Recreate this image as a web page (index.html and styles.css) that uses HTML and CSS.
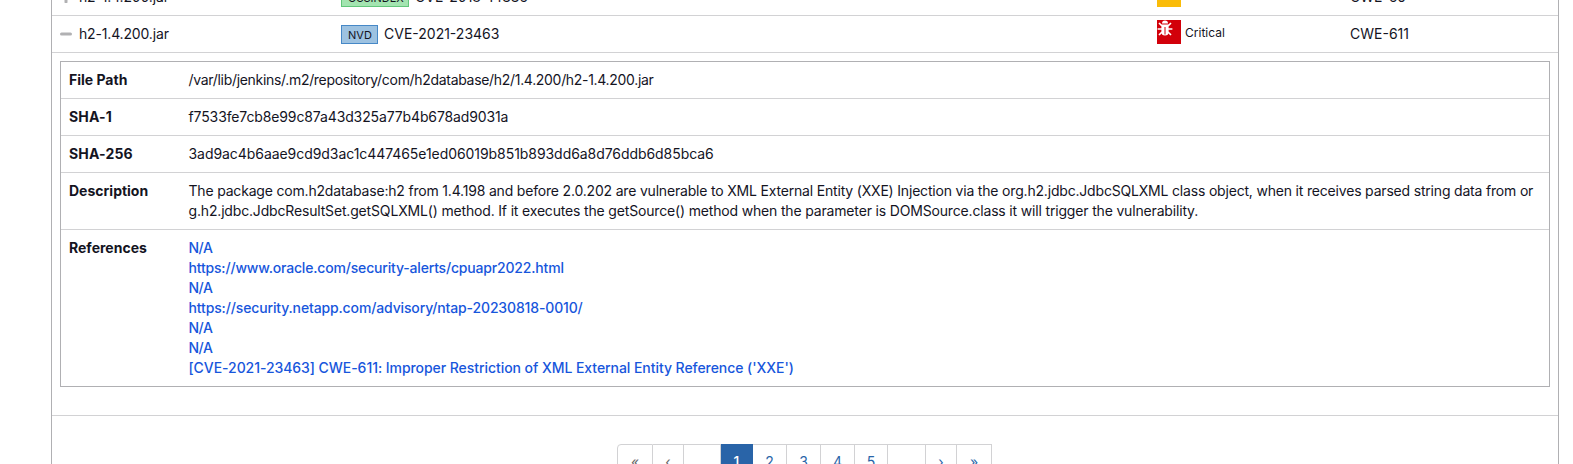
FILE: index.html
```
<!DOCTYPE html>
<html lang="en">
<head>
<meta charset="utf-8">
<title>Dependency-Check Results</title>
<link rel="stylesheet" href="styles.css">
</head>
<body>
<main class="panel">
  <div class="row row-cut">
    <div class="cell cell-file"><svg class="toggle" viewBox="0 0 12 12"><path d="M1 6h10M6 1v10"/></svg><span class="t t-file">h2-1.4.200.jar</span></div>
    <div class="cell cell-cve"><span class="badge badge-oss">OSSINDEX</span><span class="t t-cve">CVE-2018-14335</span></div>
    <div class="cell cell-sev"><span class="sev sev-medium"></span><span class="sev-label">Medium</span></div>
    <div class="cell cell-cwe"><span class="t t-cwe">CWE-59</span></div>
  </div>
  <div class="row">
    <div class="cell cell-file"><svg class="toggle" viewBox="0 0 12 12"><path d="M1.500 6h9"/></svg><span class="t t-file">h2-1.4.200.jar</span></div>
    <div class="cell cell-cve"><span class="badge badge-nvd">NVD</span><span class="t t-cve">CVE-2021-23463</span></div>
    <div class="cell cell-sev"><span class="sev sev-critical"><svg class="bug" viewBox="0 0 16 16"><path class="body" d="M5 3.6a3 3 0 0 1 6 0zM4.4 4.6h7.2V12a3.6 3.6 0 0 1-7.200 0z"/><path class="legs" d="M2 3l3 3M14 3l-3 3M.6 9H5M15.400 9H11M2 15l3-3M14 15l-3-3"/><path class="slit" d="M8 7v7.500"/></svg></span><span class="sev-label">Critical</span></div>
    <div class="cell cell-cwe"><span class="t t-cwe">CWE-611</span></div>
  </div>
  <section class="detail">
    <dl class="box">
      <div class="item"><dt><span class="t">File Path</span></dt><dd><span class="t path">/var/lib/jenkins/.m2/repository/com/h2database/h2/1.4.200/h2-1.4.200.jar</span></dd></div>
      <div class="item"><dt><span class="t sha-key">SHA-1</span></dt><dd><span class="t sha1">f7533fe7cb8e99c87a43d325a77b4b678ad9031a</span></dd></div>
      <div class="item"><dt><span class="t sha-key">SHA-256</span></dt><dd><span class="t sha256">3ad9ac4b6aae9cd9d3ac1c447465e1ed06019b851b893dd6a8d76ddb6d85bca6</span></dd></div>
      <div class="item"><dt><span class="t">Description</span></dt><dd><span class="t desc-a">The package com.h2database:h2 from 1.4.198 and before 2.0.202 are vulnerable to XML External Entity (XXE) Injection via the org.h2.jdbc.JdbcSQLXML class object, when it receives parsed string data from or</span><br><span class="t desc-b">g.h2.jdbc.JdbcResultSet.getSQLXML() method. If it executes the getSource() method when the parameter is DOMSource.class it will trigger the vulnerability.</span></dd></div>
      <div class="item"><dt><span class="t">References</span></dt><dd class="links"><a class="t na">N/A</a><a class="t link-oracle">https://www.oracle.com/security-alerts/cpuapr2022.html</a><a class="t na">N/A</a><a class="t link-netapp">https://security.netapp.com/advisory/ntap-20230818-0010/</a><a class="t na">N/A</a><a class="t na">N/A</a><a class="t link-cve">[CVE-2021-23463] CWE-611: Improper Restriction of XML External Entity Reference ('XXE')</a></dd></div>
    </dl>
  </section>
  <nav class="pager">
    <span class="page first w36">«</span><span class="page muted w31">‹</span><span class="page muted w37">…</span><span class="page active w32">1</span><span class="page w34">2</span><span class="page w34">3</span><span class="page w34">4</span><span class="page w33">5</span><span class="page w38">…</span><span class="page w31">›</span><span class="page w35">»</span>
  </nav>
</main>
</body>
</html>
```
FILE: styles.css
```
* { box-sizing: border-box; }
body { margin: 0; height: 464px; overflow: hidden; background: #fff; color: #14141f; font: 14px/20px Inter, "Liberation Sans", sans-serif; }
.panel { margin-left: 51px; width: 1508px; height: 464px; overflow: hidden; border: solid #b0b0b3; border-width: 0 1px; }
.t { white-space: nowrap; }
.row { display: grid; grid-template-columns: 281px 816px 193px 1fr; height: 37px; padding-left: 8px; border-bottom: 1px solid #d2d2d4; align-items: center; }
.row-cut { margin-top: -21px; }
.cell { display: flex; align-items: center; white-space: nowrap; }
.toggle { width: 12px; height: 12px; margin: -1px 7px 0 0; stroke: #b1b1b3; stroke-width: 3; stroke-linecap: round; }
.badge { height: 19px; padding: 0 6px; margin-right: 6px; border: 1px solid; font-size: 11px; line-height: 18px; }
.badge-oss { background: #a3e4b0; border-color: #62c67a; width: 68px; }
.badge-nvd { background: #9dc2e1; border-color: #4688c7; width: 37px; }
.cell-cve { margin-top: 1px; }
.cell-cve .t { margin-top: -2px; }
.cell-sev { margin-top: -4px; }
.sev { width: 24px; height: 24px; margin-right: 4px; }
.sev-medium { background: #fabc09; }
.sev-critical { background: #d2000a; }
.bug { display: block; width: 16px; height: 16px; }
.body { fill: #fff; }
.legs { fill: none; stroke: #fff; stroke-width: 1.7; }
.slit { stroke: #d2000a; stroke-width: 1; }
.sev-label { font-size: 12px; padding-top: 1px; }
.detail { height: 363px; padding: 8px; border-bottom: 1px solid #d2d2d4; }
.box { margin: 0; height: 326px; width: 1490px; border: 1px solid #b0b0b3; }
.item { display: grid; grid-template-columns: 119.5px 1fr; padding: 8px; border-bottom: 1px solid #d2d2d4; }
.item:last-child { border: 0; }
dt { font-weight: 700; }
dd { margin: 0; }
.links { display: flex; flex-direction: column; align-items: flex-start; color: #1756dc; font-weight: 500; }
.t-file { letter-spacing: -0.16px; }
.sha-key { letter-spacing: 0.15px; }
.path { letter-spacing: -0.31px; }
.sha1 { letter-spacing: -0.125px; }
.sha256 { letter-spacing: -0.06px; }
.desc-a { letter-spacing: -0.187px; }
.desc-b { letter-spacing: -0.168px; }
.na { letter-spacing: -0.5px; }
.link-oracle { letter-spacing: -0.18px; }
.link-netapp { letter-spacing: -0.14px; }
.link-cve { letter-spacing: -0.057px; }
.pager { display: flex; padding-left: 565px; margin-top: 28px; color: #2964a8; }
.page { height: 34px; border: 1px solid #d2d2d4; border-left: 0; text-align: center; line-height: 33px; }
.first { border-left: 1px solid #d2d2d4; border-radius: 4px 0 0 4px; color: #666; }
.muted { color: #666; }
.active { background: #2964a8; border-color: #2964a8; color: #fff; font-weight: 500; }
.w31 { width: 31px; }
.w32 { width: 32px; }
.w33 { width: 33px; }
.w34 { width: 34px; }
.w35 { width: 35px; }
.w36 { width: 36px; }
.w37 { width: 37px; }
.w38 { width: 38px; }
```
